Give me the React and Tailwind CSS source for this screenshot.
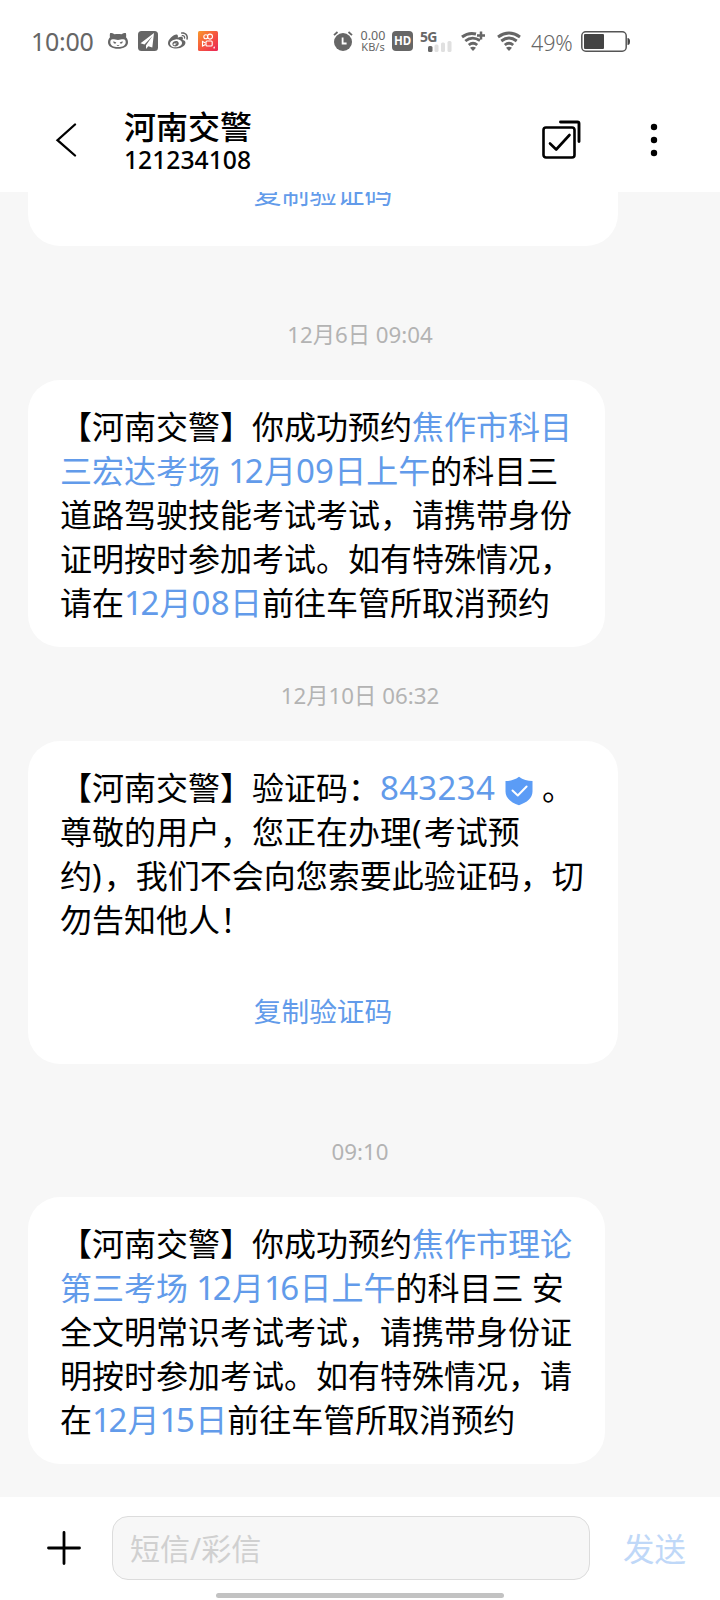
import { FaWeibo } from 'react-icons/fa';

const threads = [
  {
    time: '12月6日 09:04',
    lines: [
      ['【河南交警】你成功预约', { link: '焦作市科目' }],
      [{ link: '三宏达考场 12月09日上午' }, '的科目三'],
      ['道路驾驶技能考试考试，请携带身份'],
      ['证明按时参加考试。如有特殊情况，'],
      ['请在', { link: '12月08日' }, '前往车管所取消预约']
    ]
  },
  {
    time: '12月10日 06:32',
    lines: [
      ['【河南交警】验证码：', { link: '843234' }, { shield: true }, '。'],
      ['尊敬的用户，您正在办理(考试预'],
      ['约)，我们不会向您索要此验证码，切'],
      ['勿告知他人！']
    ],
    code: true
  },
  {
    time: '09:10',
    lines: [
      ['【河南交警】你成功预约', { link: '焦作市理论' }],
      [{ link: '第三考场 12月16日上午' }, '的科目三 安'],
      ['全文明常识考试考试，请携带身份证'],
      ['明按时参加考试。如有特殊情况，请'],
      ['在', { link: '12月15日' }, '前往车管所取消预约']
    ]
  }
];

const ShieldIcon = () => (
  <svg className="inline-block w-7 h-[30px] ml-[10px] mr-[9px] -mt-[1px]" viewBox="0 0 28 30">
    <path fill="#5b9cf6" d="M14 .8c4 3 8.500 4.200 13.500 4.300v10.400c0 6.500-5.500 11-13.500 13.700C6 26.500.5 22 .5 15.500V5.100C5.500 5 10 3.800 14 .8z" />
    <path d="M7.500 14.500l5.300 5 8.800-9" fill="none" stroke="#fff" strokeWidth="2" strokeLinecap="round" strokeLinejoin="round" />
  </svg>
);

const CatIcon = () => (
  <svg className="w-5 h-[18px]" viewBox="0 0 20 18">
    <path fill="#666" d="M2.200 1c1.800 0 3.200.5 4.300 1.200 2.300-.4 4.700-.4 7 0C14.600 1.500 16 1 17.800 1c.5 1.500.5 3 .2 4.300 1.200 1.300 2 3 2 4.900 0 4.300-4.300 6.500-10 6.500s-10-2.200-10-6.500c0-1.900.8-3.600 2-4.900C1.700 4 1.700 2.500 2.200 1z" />
    <path fill="#fff" d="M4.600 7.300c2 0 3.600.6 5.400.6s3.400-.6 5.400-.6c1.500 0 2.300 1.200 2.300 2.900 0 3.200-3.200 4.900-7.700 4.900s-7.700-1.700-7.700-4.900c0-1.700.8-2.900 2.300-2.900z" />
    <path fill="#666" d="M5.300 9.200l3 1.200c-.3.900-.9 1.300-1.500 1.200-.9-.1-1.500-1-1.500-2.400zM14.700 9.200l-3 1.200c.3.900.9 1.300 1.500 1.200.9-.1 1.500-1 1.500-2.400z" />
    <path d="M8.800 13.300q1.200.8 2.400 0" fill="none" stroke="#666" strokeWidth=".8" />
  </svg>
);

const PlaneIcon = () => (
  <svg className="w-5 h-5" viewBox="0 0 20 20">
    <rect width="20" height="20" rx="3.500" fill="#666" />
    <path fill="#fff" d="M16 2L2.500 12.200l4 1.300L14.500 5 8 14.200V18l2.300-2.700 4 1.200z" />
  </svg>
);

const CameraAppIcon = () => (
  <svg className="w-5 h-5" viewBox="0 0 20 20">
    <defs>
      <linearGradient id="cam" x1="0" y1="0" x2="1" y2="1">
        <stop offset="0" stopColor="#f9992c" />
        <stop offset=".5" stopColor="#f5563f" />
        <stop offset="1" stopColor="#ea2456" />
      </linearGradient>
    </defs>
    <rect width="20" height="20" rx="1.500" fill="url(#cam)" />
    <g fill="none" stroke="#fff" strokeWidth="1.100">
      <circle cx="7.800" cy="5.800" r="2" />
      <circle cx="12" cy="5.600" r="2.500" />
      <rect x="8" y="10" width="6.200" height="5" rx="1" />
      <path d="M7.500 12L4.500 10.500v4.500l3-1.500M15.500 16.500l.8-.2-.4 1.200" />
    </g>
  </svg>
);

const AlarmIcon = () => (
  <svg className="w-5 h-5" viewBox="0 0 20 20">
    <circle cx="10" cy="11" r="9" fill="#666" />
    <path d="M1 4.200L4.500 1M19 4.200L15.500 1" stroke="#666" strokeWidth="1.800" />
    <path d="M9.600 6.500v6h4" fill="none" stroke="#fff" strokeWidth="1.800" />
  </svg>
);

const WifiIcon = ({ plus }) => (
  <svg className="w-6 h-5" viewBox="0 0 24 20">
    <g fill="none" stroke="#666" strokeWidth="2.900">
      <path d={plus ? 'M1 6Q7.500 1 15 3' : 'M1 6Q12-1.800 23 6'} />
      <path d={plus ? 'M4.300 10Q11 4.500 19 9.500' : 'M4.300 10Q12 4.200 19.700 10'} />
      <path d="M7.800 14Q12 10.500 16.200 14" />
      {plus && <path d="M20 .5v8M16 4.500h8" strokeWidth="2.500" />}
    </g>
    <path fill="#666" d="M9 16.800q3-2 6 0L12 20z" />
  </svg>
);

const SignalIcon = () => (
  <div className="relative w-8 h-[21px]">
    <span className="absolute left-0 -top-[1px] text-[14px] leading-[13px] tracking-[-0.7px] font-bold text-[#666]">5G</span>
    <svg className="absolute left-2 bottom-0 w-6 h-3" viewBox="0 0 24 12">
      <rect x="0" y="6" width="4.500" height="6" rx="1.500" fill="#666" />
      <rect x="6.500" y="4.500" width="4" height="7.500" rx="1.500" fill="#e0e0e0" />
      <rect x="13" y="2.500" width="4" height="9.500" rx="1.500" fill="#e0e0e0" />
      <rect x="19.500" y="1" width="4" height="11" rx="1.500" fill="#e0e0e0" />
    </svg>
  </div>
);

const StatusBar = () => (
  <div className="flex items-center h-[82px] pl-[31px] text-[#666]">
    <span className="w-[63px] pt-[2px] text-[25px] tracking-[-0.3px] whitespace-nowrap">10:00</span>
    <div className="flex items-center gap-[10px] ml-[14px]">
      <CatIcon />
      <PlaneIcon />
      <FaWeibo className="w-5 h-5" />
      <CameraAppIcon />
    </div>
    <div className="flex items-center ml-[115px]">
      <AlarmIcon />
      <div className="w-[26px] ml-[7px] flex flex-col items-center text-[12.500px] leading-[11.500px] whitespace-nowrap">
        <div>0.00</div>
        <div className="text-[11px]">KB/s</div>
      </div>
      <div className="w-[21px] h-5 ml-[6px] rounded bg-[#666] text-white text-[11.500px] leading-5 font-bold text-center">HD</div>
      <div className="ml-[7px]"><SignalIcon /></div>
      <div className="ml-[9px]"><WifiIcon plus /></div>
      <div className="ml-3"><WifiIcon /></div>
      <span className="w-[43px] ml-[10px] mt-[5px] text-[21.500px] tracking-[-0.1px] font-light whitespace-nowrap">49%</span>
      <svg className="w-[49px] h-[21px] ml-[7px]" viewBox="0 0 49 21">
        <rect x=".8" y=".8" width="44.400" height="19.400" rx="4" fill="none" stroke="#555" strokeWidth="1.500" />
        <rect x="3" y="3" width="20" height="15" rx="1" fill="#444" />
        <path d="M46.500 7v7q2.500 0 2.500-3.500T46.500 7z" fill="#444" />
      </svg>
    </div>
  </div>
);

const Header = () => (
  <div className="flex items-center h-[110px] pl-[55px] pr-[62px] text-black">
    <svg className="w-[22px] h-[34px] mt-[5px]" viewBox="0 0 22 34">
      <path d="M20 1.500L2.500 17.200 20 32.500" fill="none" stroke="#000" strokeWidth="2.300" strokeLinecap="round" />
    </svg>
    <div className="ml-[47px] mt-[8px] flex-1">
      <div className="text-[32px] leading-[38px] font-medium">河南交警</div>
      <div className="text-[24.700px] leading-[28px] font-medium">121234108</div>
    </div>
    <svg className="w-[39px] h-[39px] mt-[5px]" viewBox="0 0 39 39">
      <g fill="none" stroke="#000" strokeWidth="2.600" strokeLinecap="round" strokeLinejoin="round">
        <rect x="1.500" y="7.500" width="31" height="30" rx="2.500" />
        <path d="M8 23.500l6.200 6L27.500 15" />
        <path d="M18.500 2h17q1.500 0 1.500 1.500v18" strokeWidth="2.900" />
      </g>
    </svg>
    <svg className="w-2 h-[34px] ml-[69px] mt-[5px]" viewBox="0 0 8 34">
      <circle cx="4" cy="4" r="3.200" />
      <circle cx="4" cy="17" r="3.200" />
      <circle cx="4" cy="30" r="3.200" />
    </svg>
  </div>
);

// digits run slightly larger than the Chinese text, with a tighter 1
const Link = ({ text }) => (
  <span className="text-[#629bea]">
    {text.split(/(1|[02-9]+)/).map((chunk, i) => {
      if (chunk === '1') return <span key={i} className="text-[33px] tracking-[-2.500px]">1</span>;
      if (/^\d/.test(chunk)) return <span key={i} className="text-[33px] tracking-[0.3px]">{chunk}</span>;
      return chunk;
    })}
  </span>
);

const Part = ({ part }) => {
  if (typeof part === 'string') {
    return part.split(/([()])/).map((chunk, i) =>
      chunk === '(' || chunk === ')' ? <span key={i} className="tracking-[2px]">{chunk}</span> : chunk
    );
  }
  return part.shield ? <ShieldIcon /> : <Link text={part.link} />;
};

const Message = ({ message }) => (
  <>
    <div className="h-[47px] flex items-center justify-center text-[22.300px] text-[#b3b3b3] whitespace-pre">
      {message.time}
    </div>
    <div className={`mt-[22px] ml-7 pl-8 pt-[25px] rounded-[32px] bg-white ${message.code ? 'w-[590px] h-[323px]' : 'w-[577px] h-[267px]'}`}>
      {message.lines.map((line, i) => (
        <p key={i} className="h-11 text-[32px] leading-[44px] whitespace-nowrap text-black">
          {line.map((part, j) => <Part key={j} part={part} />)}
        </p>
      ))}
      {message.code && (
        <div className="mt-[47px] mr-8 text-center text-[27.700px] leading-[44px] text-[#629bea]">复制验证码</div>
      )}
    </div>
  </>
);

export default function App() {
  return (
    <div className="w-[720px] h-[1600px] flex flex-col overflow-hidden bg-[#f7f7f7] font-['Noto_Sans','Noto_Sans_CJK_SC',sans-serif]">
      <div className="bg-white shrink-0">
        <StatusBar />
        <Header />
      </div>

      <div className="h-[1305px] shrink-0 overflow-hidden">
        <div className="flex items-start justify-center w-[590px] h-[54px] ml-7 rounded-b-[32px] bg-white">
          <span className="-mt-[21px] text-[27.700px] leading-[44px] text-[#629bea]">复制验证码</span>
        </div>
        <div className="mt-[65px]"><Message message={threads[0]} /></div>
        <div className="mt-[25px]"><Message message={threads[1]} /></div>
        <div className="mt-[64px]"><Message message={threads[2]} /></div>
      </div>

      <div className="flex-1 bg-white">
        <div className="flex items-start pt-[19px] pl-[47px]">
          <svg className="w-[34px] h-[34px] mt-[15px]" viewBox="0 0 34 34">
            <path d="M17 1.500v31M1.500 17h31" stroke="#000" strokeWidth="2.800" strokeLinecap="round" />
          </svg>
          <div className="w-[478px] h-16 ml-[31px] pl-[17px] rounded-2xl border border-[#dcdcdc] bg-[#f7f7f7] text-[30px] leading-[64px] text-[#d0d0d0]">
            短信/彩信
          </div>
          <span className="ml-[33px] text-[31.500px] leading-[66px] text-[#bfd8f8]">发送</span>
        </div>
        <div className="w-[288px] h-[5px] mt-[11px] mx-auto rounded-full bg-[#c2c2c2]" />
      </div>
    </div>
  );
}
